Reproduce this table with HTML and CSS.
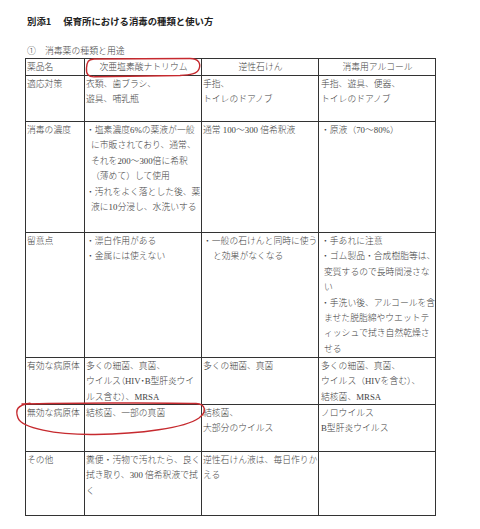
FILE: index.html
```html
<!DOCTYPE html>
<html lang="ja">
<head>
<meta charset="utf-8">
<link rel="stylesheet" href="styles.css">
</head>
<body>
<div class="page">
  <h1 class="title"><span>別添1</span><span class="gap"></span><span>保育所における消毒の種類と使い方</span></h1>
  <p class="sub"><span>①</span><span class="gap2"></span><span>消毒薬の種類と用途</span></p>

  <div class="grid">
    <div class="c">薬品名</div>
    <div class="c ctr">次亜塩素酸ナトリウム</div>
    <div class="c ctr">逆性石けん</div>
    <div class="c ctr">消毒用アルコール</div>

    <div class="c">適応対策</div>
    <div class="c"><div>衣類、歯ブラシ、</div><div>遊具、哺乳瓶</div></div>
    <div class="c"><div>手指、</div><div>トイレのドアノブ</div></div>
    <div class="c c4"><div>手指、遊具、便器、</div><div>トイレのドアノブ</div></div>

    <div class="c">消毒の濃度</div>
    <div class="c">
      <div>・塩素濃度6%の薬液が一般</div>
      <div class="in">に市販されており、通常、</div>
      <div class="in">それを200〜300倍に希釈</div>
      <div class="in">（薄めて）して使用</div>
      <div>・汚れをよく落とした後、薬</div>
      <div class="in">液に10分浸し、水洗いする</div>
    </div>
    <div class="c"><div>通常 100〜300 倍希釈液</div></div>
    <div class="c c4"><div>・原液（70〜80%）</div></div>

    <div class="c">留意点</div>
    <div class="c"><div>・漂白作用がある</div><div>・金属には使えない</div></div>
    <div class="c"><div>・一般の石けんと同時に使う</div><div class="in2">と効果がなくなる</div></div>
    <div class="c c4">
      <div>・手あれに注意</div>
      <div>・ゴム製品・合成樹脂等は、</div>
      <div class="in3">変質するので長時間浸さな</div>
      <div class="in3">い</div>
      <div>・手洗い後、アルコールを含</div>
      <div class="in3">ませた脱脂綿やウエットテ</div>
      <div class="in3">ィッシュで拭き自然乾燥さ</div>
      <div class="in3">せる</div>
    </div>

    <div class="c">有効な病原体</div>
    <div class="c"><div>多くの細菌、真菌、</div><div class="tight">ウイルス（HIV・B型肝炎ウイ</div><div>ルス含む）、MRSA</div></div>
    <div class="c"><div>多くの細菌、真菌</div></div>
    <div class="c c4"><div>多くの細菌、真菌、</div><div>ウイルス（HIVを含む）、</div><div>結核菌、MRSA</div></div>

    <div class="c">無効な病原体</div>
    <div class="c"><div>結核菌、一部の真菌</div></div>
    <div class="c"><div>結核菌、</div><div>大部分のウイルス</div></div>
    <div class="c c4"><div>ノロウイルス</div><div>B型肝炎ウイルス</div></div>

    <div class="c">その他</div>
    <div class="c"><div>糞便・汚物で汚れたら、良く</div><div>拭き取り、300 倍希釈液で拭</div><div>く</div></div>
    <div class="c"><div>逆性石けん液は、毎日作りか</div><div>える</div></div>
    <div class="c c4"></div>
  </div>

  <svg class="marks" width="480" height="529" viewBox="0 0 480 529" aria-hidden="true">
    <path d="M94 59 L190 58.5 C199 58.5 201 64 199 69 C197 74 190 75 180 75.5 L95 76.8 C88 77.2 86 74 86.5 68 C87 62 88 59.5 94 59 Z"/>
    <path d="M22 404 C60 403 160 402.5 196 403.5 C206 404 207 412 199 418 C185 428 140 434 95 434.5 C55 435 22 428 18 418 C15 410 17 405 30 403.2"/>
  </svg>
</div>
</body>
</html>
```

FILE: styles.css
```css
html, body {
  margin: 0;
  padding: 0;
  background: #ffffff;
}

.page {
  position: relative;
  width: 480px;
  height: 529px;
  padding: 15px 0 0 25px;
  box-sizing: border-box;
  font-family: "Liberation Serif", "Noto Sans CJK JP", serif;
  color: #444;
}

.title {
  margin: 0;
  display: flex;
  font-family: "Noto Sans CJK JP", sans-serif;
  font-weight: 700;
  font-size: 9.4px;
  line-height: 12px;
  color: #222;
  padding-left: 2px;
}

.title .gap { width: 12px; }

.sub {
  margin: 18px 0 0 0;
  display: flex;
  font-size: 8.9px;
  line-height: 12px;
  font-weight: 300;
  padding-left: 2px;
}

.sub .gap2 { width: 9px; }

.grid {
  margin-top: 1px;
  width: 411px;
  display: grid;
  grid-template-columns: 58px 116px 116px 116px;
  grid-template-rows: 16px 45px 110px 124px 46px 46px 63px;
  gap: 1px;
  padding: 1px;
  box-sizing: border-box;
  background: #333;
  font-size: 8.8px;
  font-weight: 300;
}

.c {
  background: #fff;
  padding: 1px 0 0 1px;
  line-height: 15.4px;
  white-space: nowrap;
  overflow: visible;
}

.grid > .c:nth-child(-n+4) {
  padding-top: 0;
  line-height: 16px;
}

.ctr { text-align: center; }

.c4 { padding-left: 2px; }

.in { padding-left: 5px; }
.in2 { padding-left: 10px; }
.in3 { padding-left: 3px; }

.tight {
  font-feature-settings: "halt";
  letter-spacing: -0.1px;
}

.marks {
  position: absolute;
  top: 0;
  left: 0;
  pointer-events: none;
}

.marks path {
  fill: none;
  stroke: #c62a2f;
  stroke-width: 1.4;
  stroke-linecap: round;
  stroke-linejoin: round;
}
```
